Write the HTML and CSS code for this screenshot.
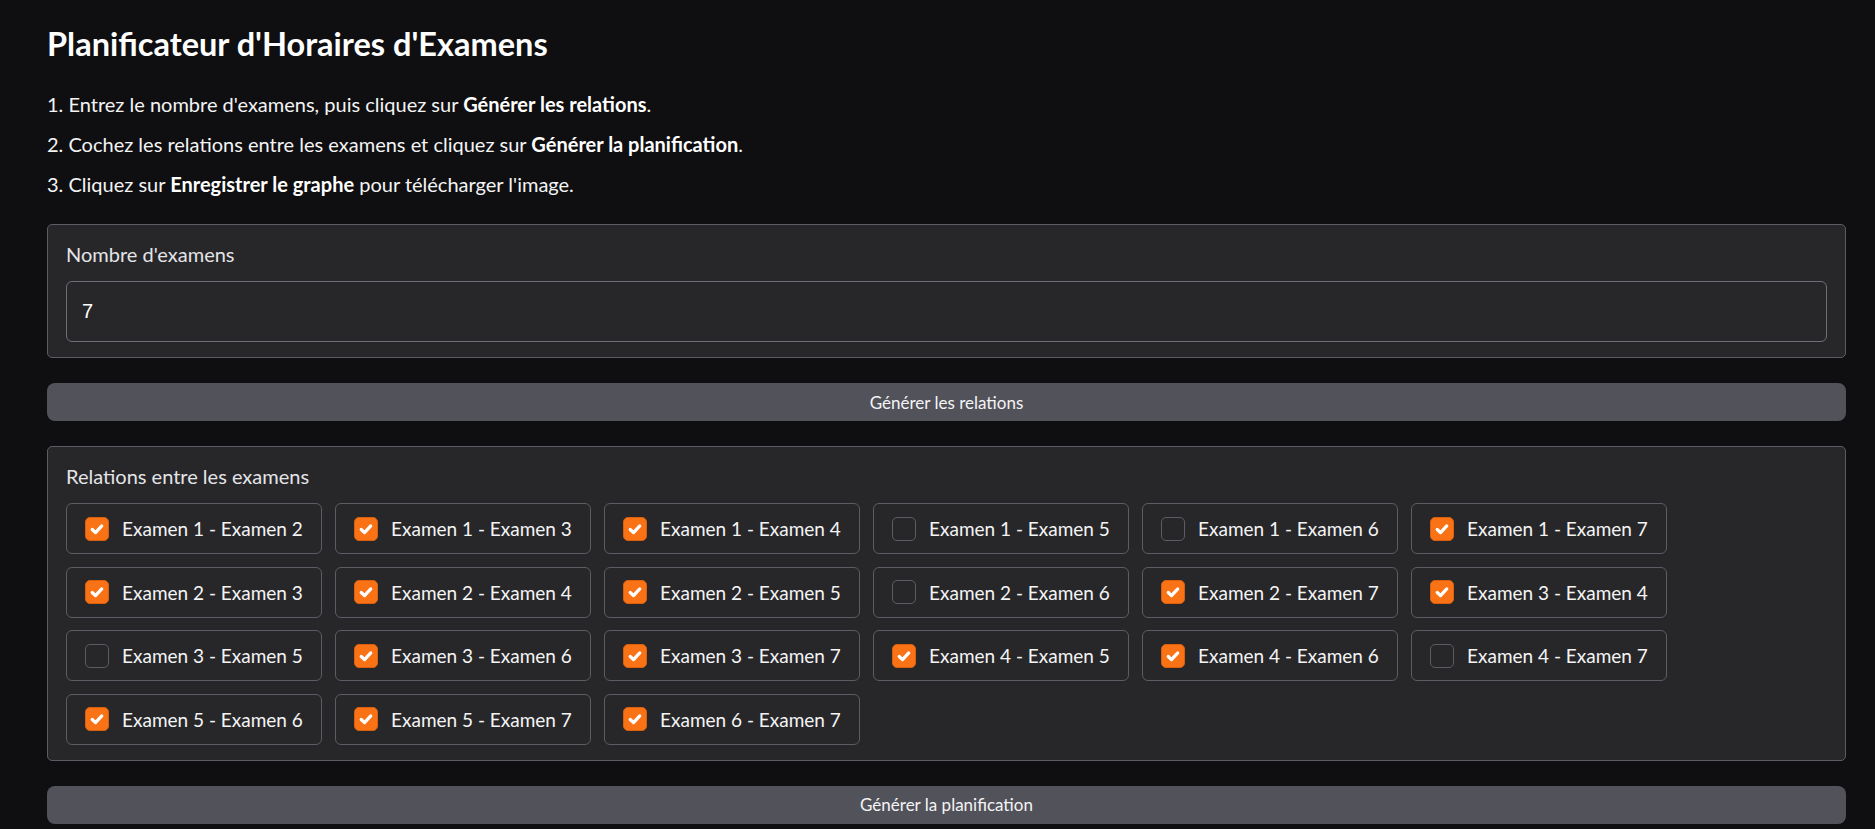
FILE: index.html
```html
<!DOCTYPE html>
<html lang="fr">
<head>
<meta charset="utf-8">
<title>Planificateur d'Horaires d'Examens</title>
<link rel="stylesheet" href="styles.css">
</head>
<body>
<div class="app">
  <h1 class="title">Planificateur d'Horaires d'Examens</h1>
  <p class="step">1. Entrez le nombre d'examens, puis cliquez sur <strong>Générer les relations</strong>.</p>
  <p class="step">2. Cochez les relations entre les examens et cliquez sur <strong>Générer la planification</strong>.</p>
  <p class="step">3. Cliquez sur <strong>Enregistrer le graphe</strong> pour télécharger l'image.</p>

  <div class="stack">
    <div class="block">
      <div class="block-label">Nombre d'examens</div>
      <div class="input">7</div>
    </div>
    <div class="btn">Générer les relations</div>
    <div class="block">
      <div class="block-label">Relations entre les examens</div>
      <div class="options">
        <label class="opt"><span class="box on"><svg viewBox="0 0 16 16"><path d="M4.2 8.4l2.6 2.5 5-5.4"/></svg></span><span class="txt">Examen 1 - Examen 2</span></label>
        <label class="opt"><span class="box on"><svg viewBox="0 0 16 16"><path d="M4.2 8.4l2.6 2.5 5-5.4"/></svg></span><span class="txt">Examen 1 - Examen 3</span></label>
        <label class="opt"><span class="box on"><svg viewBox="0 0 16 16"><path d="M4.2 8.4l2.6 2.5 5-5.4"/></svg></span><span class="txt">Examen 1 - Examen 4</span></label>
        <label class="opt"><span class="box"></span><span class="txt">Examen 1 - Examen 5</span></label>
        <label class="opt"><span class="box"></span><span class="txt">Examen 1 - Examen 6</span></label>
        <label class="opt"><span class="box on"><svg viewBox="0 0 16 16"><path d="M4.2 8.4l2.6 2.5 5-5.4"/></svg></span><span class="txt">Examen 1 - Examen 7</span></label>
        <label class="opt"><span class="box on"><svg viewBox="0 0 16 16"><path d="M4.2 8.4l2.6 2.5 5-5.4"/></svg></span><span class="txt">Examen 2 - Examen 3</span></label>
        <label class="opt"><span class="box on"><svg viewBox="0 0 16 16"><path d="M4.2 8.4l2.6 2.5 5-5.4"/></svg></span><span class="txt">Examen 2 - Examen 4</span></label>
        <label class="opt"><span class="box on"><svg viewBox="0 0 16 16"><path d="M4.2 8.4l2.6 2.5 5-5.4"/></svg></span><span class="txt">Examen 2 - Examen 5</span></label>
        <label class="opt"><span class="box"></span><span class="txt">Examen 2 - Examen 6</span></label>
        <label class="opt"><span class="box on"><svg viewBox="0 0 16 16"><path d="M4.2 8.4l2.6 2.5 5-5.4"/></svg></span><span class="txt">Examen 2 - Examen 7</span></label>
        <label class="opt"><span class="box on"><svg viewBox="0 0 16 16"><path d="M4.2 8.4l2.6 2.5 5-5.4"/></svg></span><span class="txt">Examen 3 - Examen 4</span></label>
        <label class="opt"><span class="box"></span><span class="txt">Examen 3 - Examen 5</span></label>
        <label class="opt"><span class="box on"><svg viewBox="0 0 16 16"><path d="M4.2 8.4l2.6 2.5 5-5.4"/></svg></span><span class="txt">Examen 3 - Examen 6</span></label>
        <label class="opt"><span class="box on"><svg viewBox="0 0 16 16"><path d="M4.2 8.4l2.6 2.5 5-5.4"/></svg></span><span class="txt">Examen 3 - Examen 7</span></label>
        <label class="opt"><span class="box on"><svg viewBox="0 0 16 16"><path d="M4.2 8.4l2.6 2.5 5-5.4"/></svg></span><span class="txt">Examen 4 - Examen 5</span></label>
        <label class="opt"><span class="box on"><svg viewBox="0 0 16 16"><path d="M4.2 8.4l2.6 2.5 5-5.4"/></svg></span><span class="txt">Examen 4 - Examen 6</span></label>
        <label class="opt"><span class="box"></span><span class="txt">Examen 4 - Examen 7</span></label>
        <label class="opt"><span class="box on"><svg viewBox="0 0 16 16"><path d="M4.2 8.4l2.6 2.5 5-5.4"/></svg></span><span class="txt">Examen 5 - Examen 6</span></label>
        <label class="opt"><span class="box on"><svg viewBox="0 0 16 16"><path d="M4.2 8.4l2.6 2.5 5-5.4"/></svg></span><span class="txt">Examen 5 - Examen 7</span></label>
        <label class="opt"><span class="box on"><svg viewBox="0 0 16 16"><path d="M4.2 8.4l2.6 2.5 5-5.4"/></svg></span><span class="txt">Examen 6 - Examen 7</span></label>
      </div>
    </div>
    <div class="btn">Générer la planification</div>
  </div>
</div>
</body>
</html>
```

FILE: styles.css
```css
html, body {
  margin: 0;
  padding: 0;
  background: #0f0f11;
  color: #f4f4f5;
  font-family: "Lato", "Noto Sans", sans-serif;
  overflow: hidden;
}

.app {
  padding: 26px 29px 0 47px;
}

.title {
  margin: 0 0 27px 0;
  font-size: 32.5px;
  line-height: 36px;
  font-weight: 700;
  color: #ffffff;
}

.step {
  margin: 0 0 10px 0;
  font-size: 20px;
  line-height: 30px;
  color: #f4f4f5;
}

.step strong {
  font-weight: 700;
  color: #ffffff;
}

.stack {
  margin-top: 25px;
  display: flex;
  flex-direction: column;
  gap: 25px;
}

.block {
  background: #27272a;
  border: 1px solid #5c5c64;
  border-radius: 5px;
  padding: 14px 18px 15px 18px;
}

.block-label {
  font-size: 20px;
  line-height: 30px;
  color: #e4e4e7;
  margin-bottom: 12px;
}

.input {
  height: 59px;
  border: 1px solid #6e6e76;
  border-radius: 6px;
  background: #27272a;
  display: flex;
  align-items: center;
  padding-left: 15px;
  font-family: "Liberation Sans", Arial, sans-serif;
  font-size: 20px;
  color: #ffffff;
}

.btn {
  height: 38px;
  border-radius: 8px;
  background: #52525b;
  display: flex;
  align-items: center;
  justify-content: center;
  font-size: 17px;
  color: #f4f4f5;
}

.options {
  display: flex;
  flex-wrap: wrap;
  column-gap: 13px;
  row-gap: 12.6px;
}

.opt {
  box-sizing: border-box;
  width: 256px;
  height: 51px;
  border: 1px solid #5c5c64;
  border-radius: 6px;
  background: #27272a;
  display: flex;
  align-items: center;
  padding-left: 18px;
}

.box {
  box-sizing: border-box;
  width: 24px;
  height: 24px;
  border-radius: 5px;
  border: 1px solid #5c5c64;
  background: #27272a;
  margin-right: 13px;
  display: flex;
  align-items: center;
  justify-content: center;
  flex: none;
}

.box.on {
  background: #f97316;
  border-color: #d9600e;
}

.box svg {
  width: 20px;
  height: 20px;
  fill: none;
  stroke: #ffffff;
  stroke-width: 2.6;
  stroke-linecap: round;
  stroke-linejoin: round;
}

.txt {
  font-size: 19px;
  color: #f4f4f5;
  white-space: nowrap;
}
```
